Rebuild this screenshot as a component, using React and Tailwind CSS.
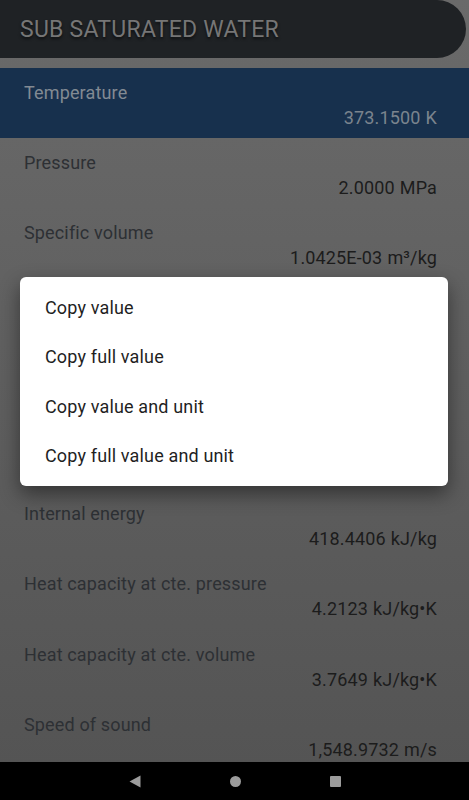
import React from "react";

const rows = [
  { label: "Temperature", value: "373.1500", unit: "K", selected: true },
  { label: "Pressure", value: "2.0000", unit: "MPa" },
  { label: "Specific volume", value: "1.0425E-03", unit: "m³/kg" },
  { label: "Density", value: "959.2048", unit: "kg/m³" },
  { label: "Specific enthalpy", value: "420.5256", unit: "kJ/kg" },
  { label: "Specific entropy", value: "1.3050", unit: "kJ/kg•K" },
  { label: "Internal energy", value: "418.4406", unit: "kJ/kg" },
  { label: "Heat capacity at cte. pressure", value: "4.2123", unit: "kJ/kg•K" },
  { label: "Heat capacity at cte. volume", value: "3.7649", unit: "kJ/kg•K" },
  { label: "Speed of sound", value: "1,548.9732", unit: "m/s" },
];

const menu = ["Copy value", "Copy full value", "Copy value and unit", "Copy full value and unit"];

export default function App() {
  return (
    <div
      className="relative w-[469px] h-[800px] overflow-hidden flex flex-col bg-gradient-to-b from-[#6a6a6a] to-[#535353]"
      style={{ fontFamily: "Roboto, 'Noto Sans', sans-serif" }}
    >
      <div className="h-[58px] w-[466px] shrink-0 bg-[#1f2225] rounded-r-[29px] flex items-center pl-[20px] pt-[3px]">
        <span className="text-[23px] text-[#767676] tracking-[0.25px] [text-shadow:0_2px_3px_rgba(0,0,0,0.6)]">
          SUB SATURATED WATER
        </span>
      </div>
      <div className="mt-[10px] flex-1 flex flex-col overflow-hidden">
        {rows.map((r, i) => (
          <div
            key={r.label}
            className={`${i >= 3 ? "h-[70.33px]" : "h-[70px]"} shrink-0 flex flex-col pt-[12px] pl-[24px] pr-[32px] tracking-[0.15px] ${r.selected ? "bg-[#17304d]" : ""}`}
          >
            <div className={`h-[25px] leading-[25px] text-[18px] ${r.selected ? "text-[#828a93]" : "text-[#2d3034]"}`}>
              {r.label}
            </div>
            <div className={`h-[25px] leading-[25px] text-[18px] text-right ${r.selected ? "text-[#7b848e]" : "text-[#1c1c1c]"}`}>
              {r.value}
              <span className="ml-[5px]">{r.unit}</span>
            </div>
          </div>
        ))}
      </div>
      <div className="h-[38px] shrink-0 bg-black flex items-center justify-center gap-[89px]">
        <svg width="12" height="13" viewBox="0 0 12 13">
          <polygon points="11.5,0.5 11.5,12.5 0.5,6.5" fill="#9c9c9c" />
        </svg>
        <div className="w-[11px] h-[11px] rounded-full bg-[#9c9c9c]" />
        <div className="w-[11px] h-[11px] rounded-[1px] bg-[#9c9c9c]" />
      </div>

      <div className="absolute left-[20px] top-[277px] w-[428px] h-[209px] bg-white rounded-[6px] shadow-[0_8px_20px_rgba(0,0,0,0.45)] pt-[6px]">
        {menu.map((m) => (
          <div key={m} className="h-[49.3px] flex items-center pl-[25px] text-[18px] tracking-[0.15px] text-[#1f1f1f]">
            {m}
          </div>
        ))}
      </div>
    </div>
  );
}
